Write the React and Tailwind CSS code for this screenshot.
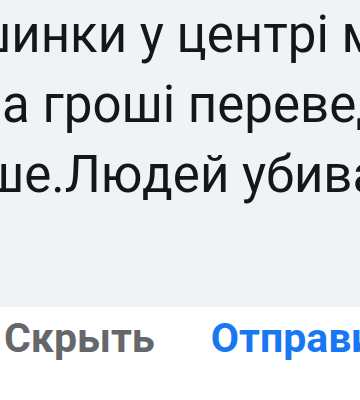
import React from 'react';

export default function App() {
  // Рядки коментаря, обрізані краями кадру
  const lines = [
    { text: 'шинки у центрі міста', shift: '-ml-[30px]' },
    { text: 'а гроші переведено', shift: 'ml-[2px]' },
    { text: 'ше.Людей убивають', shift: '-ml-[17px]' },
  ];

  return (
    <div className="w-[360px] h-[400px] overflow-hidden bg-white" style={{ fontFamily: 'Roboto, "Liberation Sans", sans-serif' }}>
      {/* Поле з текстом */}
      <div className="bg-[#f0f2f5] h-[307px] overflow-hidden">
        {lines.map((l) => (
          <div key={l.text} className={`whitespace-nowrap text-[51px] leading-[70px] text-[#14161a] ${l.shift}`}>
            {l.text}
          </div>
        ))}
      </div>

      {/* Дії */}
      <div className="flex items-center gap-[56px] whitespace-nowrap pt-[3px] pl-[4px] text-[41px] font-bold leading-[56px]">
        <button className="text-[#65676b]">Скрыть</button>
        <button className="text-[#1877f2]">Отправить</button>
      </div>
    </div>
  );
}
